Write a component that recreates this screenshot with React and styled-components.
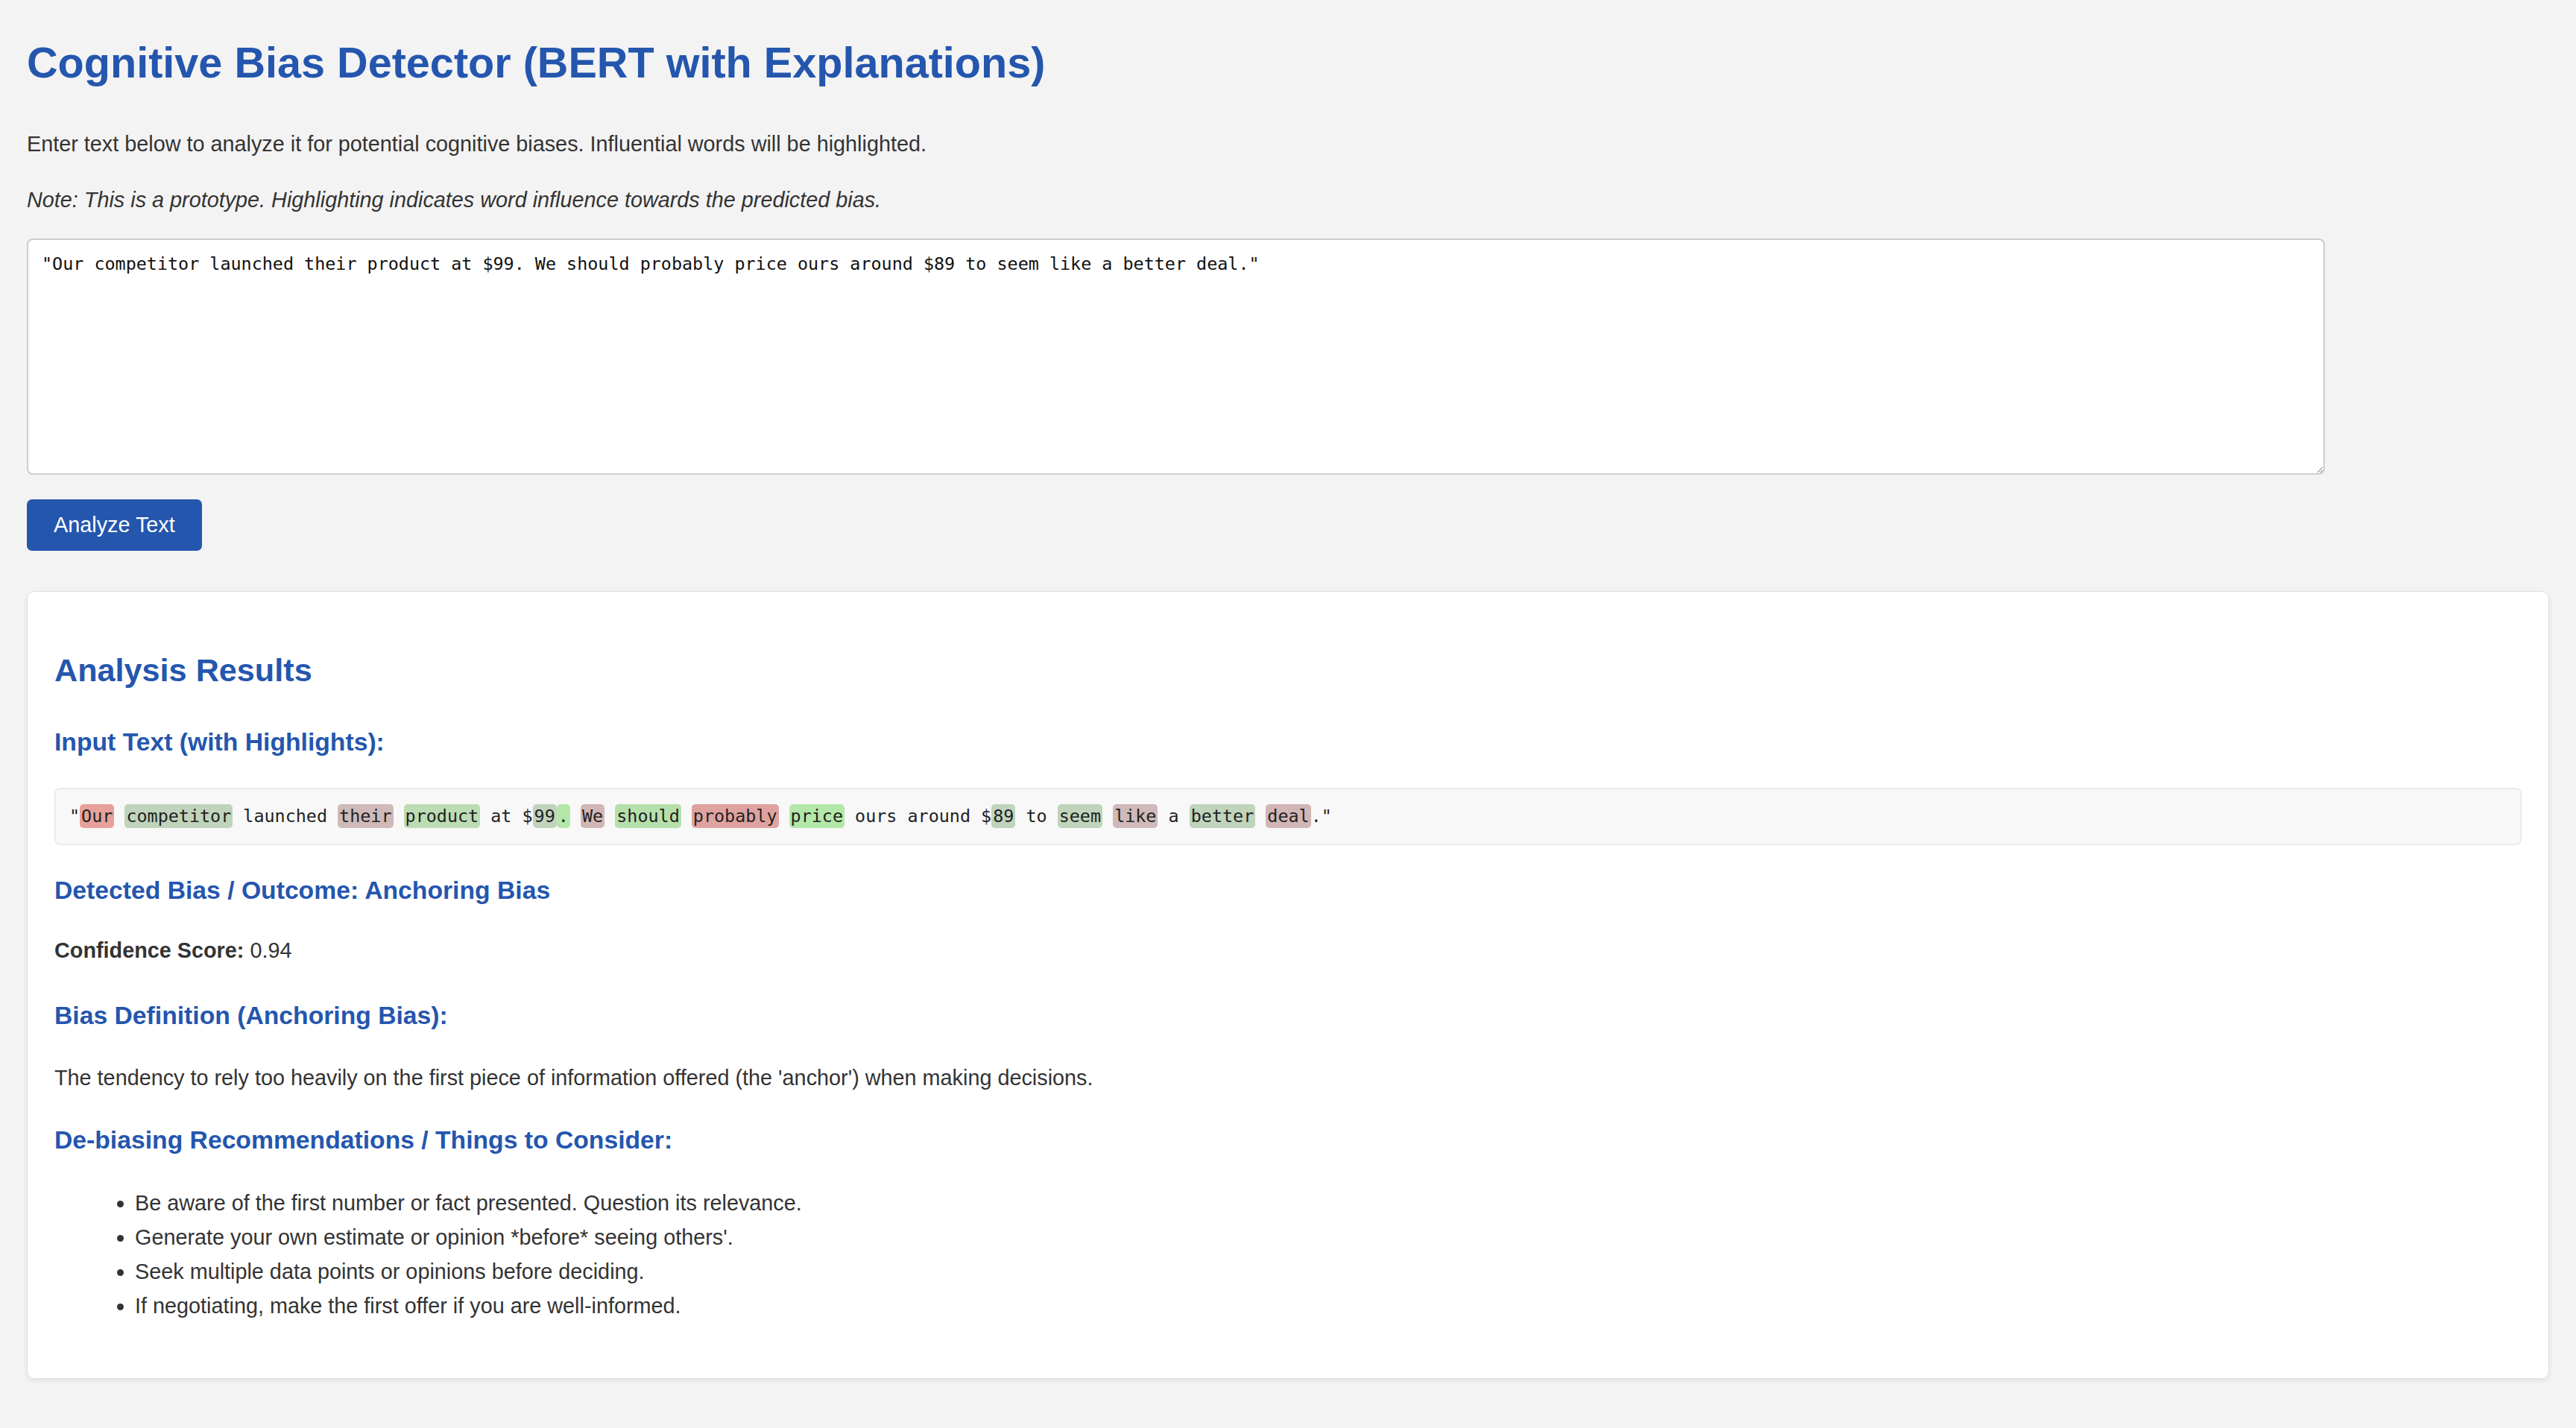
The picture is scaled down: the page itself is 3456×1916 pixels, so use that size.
import React from "react";
import styled, { createGlobalStyle } from "styled-components";

const GlobalStyle = createGlobalStyle`
  body {
    margin: 0;
    background: #f3f3f3;
    color: #333;
    font-family: "Liberation Sans", Arial, Helvetica, sans-serif;
    font-size: 28.8px;
    line-height: 1.6;
  }
`;

const Page = styled.main`
  display: flow-root;
  padding: 0 36px 36px;
`;

const Title = styled.h1`
  color: #2456ae;
  font-size: 57.6px;
  margin: 38px 0 40px;
`;

const Intro = styled.p`
  margin: 28.8px 0;
  font-style: ${(p) => (p.$italic ? "italic" : "normal")};
`;

const InputArea = styled.textarea`
  display: block;
  box-sizing: border-box;
  width: calc(90% + 37px);
  height: 317px;
  margin: 29px 0 33px;
  padding: 18px;
  border: 2px solid #cdcdcd;
  border-radius: 8px;
  background: #fff;
  color: #111;
  font-family: "DejaVu Sans Mono", monospace;
  font-size: 23.4px;
`;

const AnalyzeButton = styled.button`
  display: block;
  padding: 18px 36px;
  border: none;
  border-radius: 7px;
  background: #2456ae;
  color: #fff;
  font-family: "Liberation Sans", Arial, sans-serif;
  font-size: 28.8px;
  line-height: normal;
  cursor: pointer;
`;

const ResultsCard = styled.section`
  margin-top: 54px;
  padding: 36px 36px 38px;
  background: #fff;
  border: 1px solid #dedede;
  border-radius: 10px;
  box-shadow: 0 3px 8px rgba(0, 0, 0, 0.07);
`;

const CardTitle = styled.h2`
  color: #2456ae;
  font-size: 43.2px;
  margin: 35px 0;
`;

const SectionTitle = styled.h3`
  color: #2456ae;
  font-size: 33.7px;
  margin: 33.7px 0;
`;

const HighlightBox = styled.div`
  padding: 18px;
  background: #f8f8f8;
  border: 2px solid #ebebeb;
  border-radius: 7px;
  font-family: "DejaVu Sans Mono", monospace;
  font-size: 23.4px;
  color: #222;
`;

const Token = styled.span`
  background: ${(p) => p.$bg};
  padding: 2px 2px;
  border-radius: 5px;
`;

const Text = styled.p`
  margin: 28.8px 0;
`;

const ScoreLine = styled.p`
  margin: -4px 0 38px;
`;

const Recs = styled.ul`
  margin: 33.7px 0 36px 36px;
  padding-left: 72px;
`;

const RED = "#e8a09a";
const RED2 = "#e0a2a0";
const GREY_G = "#c0d4bc";
const GREEN = "#bcdcb4";
const GREEN2 = "#b6e0ab";
const BRIGHT = "#b4e8a8";
const PINK = "#cfb9b9";
const PINK2 = "#d2b6b6";

const tokens = [
  ['"', null],
  ["Our", RED],
  [" ", null],
  ["competitor", GREY_G],
  [" launched ", null],
  ["their", PINK],
  [" ", null],
  ["product", GREEN],
  [" at $", null],
  ["99", GREY_G],
  [".", BRIGHT],
  [" ", null],
  ["We", PINK2],
  [" ", null],
  ["should", GREEN2],
  [" ", null],
  ["probably", RED2],
  [" ", null],
  ["price", BRIGHT],
  [" ours around $", null],
  ["89", GREY_G],
  [" to ", null],
  ["seem", GREY_G],
  [" ", null],
  ["like", PINK],
  [" a ", null],
  ["better", GREY_G],
  [" ", null],
  ["deal", PINK2],
  ['."', null],
];

const recommendations = [
  "Be aware of the first number or fact presented. Question its relevance.",
  "Generate your own estimate or opinion *before* seeing others'.",
  "Seek multiple data points or opinions before deciding.",
  "If negotiating, make the first offer if you are well-informed.",
];

const SAMPLE =
  '"Our competitor launched their product at $99. We should probably price ours around $89 to seem like a better deal."';

export default function App() {
  return (
    <Page>
      <GlobalStyle />
      <Title>Cognitive Bias Detector (BERT with Explanations)</Title>
      <Intro>
        Enter text below to analyze it for potential cognitive biases. Influential words will be highlighted.
      </Intro>
      <Intro $italic>
        Note: This is a prototype. Highlighting indicates word influence towards the predicted bias.
      </Intro>
      <InputArea defaultValue={SAMPLE} />
      <AnalyzeButton>Analyze Text</AnalyzeButton>

      <ResultsCard>
        <CardTitle>Analysis Results</CardTitle>
        <SectionTitle>Input Text (with Highlights):</SectionTitle>
        <HighlightBox>
          {tokens.map(([t, bg], i) =>
            bg ? (
              <Token key={i} $bg={bg}>
                {t}
              </Token>
            ) : (
              <React.Fragment key={i}>{t}</React.Fragment>
            )
          )}
        </HighlightBox>
        <SectionTitle>Detected Bias / Outcome: Anchoring Bias</SectionTitle>
        <ScoreLine>
          <strong>Confidence Score:</strong> 0.94
        </ScoreLine>
        <SectionTitle>Bias Definition (Anchoring Bias):</SectionTitle>
        <Text>
          The tendency to rely too heavily on the first piece of information offered (the 'anchor') when making decisions.
        </Text>
        <SectionTitle>De-biasing Recommendations / Things to Consider:</SectionTitle>
        <Recs>
          {recommendations.map((r) => (
            <li key={r}>{r}</li>
          ))}
        </Recs>
      </ResultsCard>
    </Page>
  );
}
